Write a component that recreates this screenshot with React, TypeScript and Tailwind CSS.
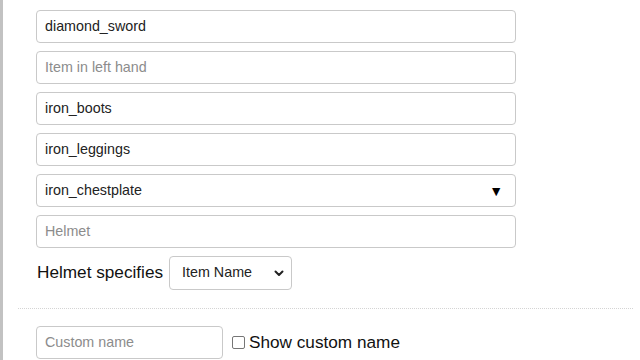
import React from "react";

const font = { fontFamily: '"Liberation Sans", Arial, sans-serif' };

function Field({ value, placeholder, arrow }: { value?: string; placeholder?: string; arrow?: boolean }) {
  return (
    <div className="flex h-[33px] w-[480px] items-center justify-between rounded-[4px] border border-[#c9c9c9] bg-white pl-[8px] pr-[12px] text-[14.3px]">
      {value ? (
        <span className="text-[#222]">{value}</span>
      ) : (
        <span className="text-[#8c8c8c]">{placeholder}</span>
      )}
      {arrow && <span className="text-[14px] leading-none text-black">▼</span>}
    </div>
  );
}

export default function App() {
  return (
    <div className="flex h-[360px] w-[640px] overflow-hidden bg-white" style={font}>
      <div className="w-[3px] shrink-0 bg-[#c2c2c2]" />
      <div className="flex flex-1 flex-col pt-[10px]">
        <div className="flex flex-col gap-[8px] pl-[33px]">
          <Field value="diamond_sword" />
          <Field placeholder="Item in left hand" />
          <Field value="iron_boots" />
          <Field value="iron_leggings" />
          <Field value="iron_chestplate" arrow />
          <Field placeholder="Helmet" />
          <div className="flex items-center gap-[6px]">
            <span className="pl-[1px] text-[17.2px] text-[#111]">Helmet specifies</span>
            <div className="flex h-[34px] w-[123px] items-center justify-between rounded-[4px] border border-[#c9c9c9] bg-white pl-[12px] pr-[6px] text-[14.3px] text-[#222]">
              <span>Item Name</span>
              <svg width="12" height="12" viewBox="0 0 12 12">
                <path d="M2.5 4.5 L6 8 L9.5 4.5" fill="none" stroke="#222" strokeWidth="2" strokeLinecap="round" strokeLinejoin="round" />
              </svg>
            </div>
          </div>
        </div>
        <div className="ml-[15px] mr-[7px] mt-[18px] border-t border-dotted border-[#d4d4d4]" />
        <div className="mt-[17px] flex items-center pl-[33px]">
          <div className="flex h-[33px] w-[187px] items-center rounded-[4px] border border-[#c9c9c9] bg-white pl-[8px] text-[14.3px] text-[#8c8c8c]">
            Custom name
          </div>
          <div className="ml-[9px] h-[13px] w-[13px] rounded-[2px] border border-[#767676] bg-white" />
          <span className="ml-[4px] text-[17.2px] text-[#111]">Show custom name</span>
        </div>
      </div>
    </div>
  );
}
